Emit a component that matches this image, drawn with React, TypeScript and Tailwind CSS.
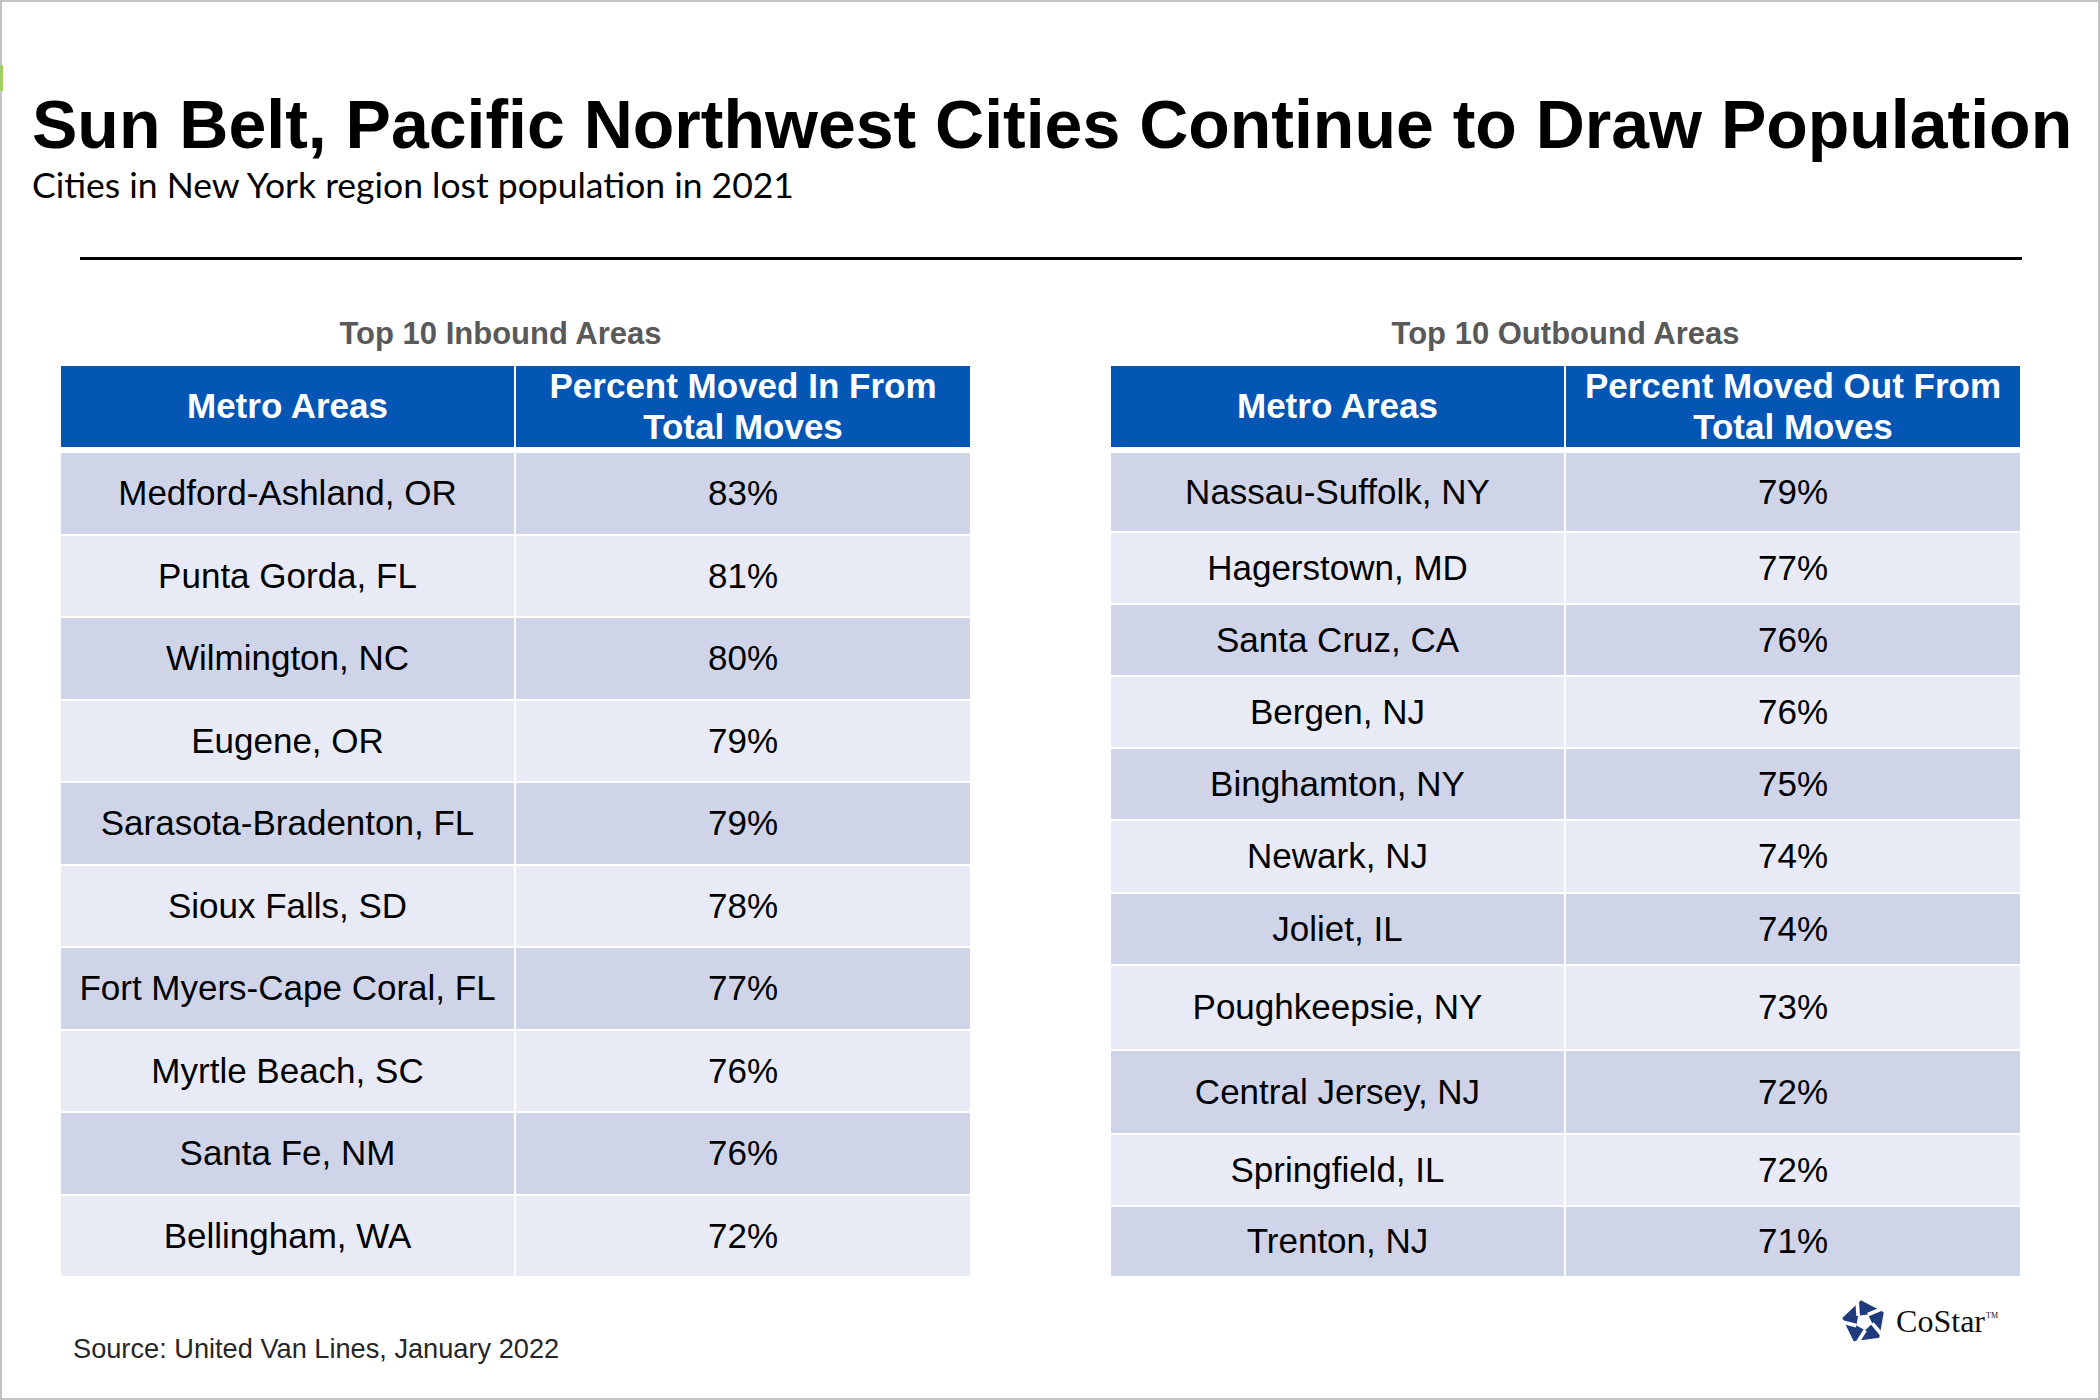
import React from 'react';

type Row = { area: string; pct: string; h: string };

const inbound: Row[] = [
  { area: 'Medford-Ashland, OR', pct: '83%', h: 'h-[80.5px]' },
  { area: 'Punta Gorda, FL', pct: '81%', h: 'h-[80.5px]' },
  { area: 'Wilmington, NC', pct: '80%', h: 'h-[80.5px]' },
  { area: 'Eugene, OR', pct: '79%', h: 'h-[80.5px]' },
  { area: 'Sarasota-Bradenton, FL', pct: '79%', h: 'h-[80.5px]' },
  { area: 'Sioux Falls, SD', pct: '78%', h: 'h-[80.5px]' },
  { area: 'Fort Myers-Cape Coral, FL', pct: '77%', h: 'h-[80.5px]' },
  { area: 'Myrtle Beach, SC', pct: '76%', h: 'h-[80.5px]' },
  { area: 'Santa Fe, NM', pct: '76%', h: 'h-[80.5px]' },
  { area: 'Bellingham, WA', pct: '72%', h: 'h-[80.5px]' },
];

// row heights differ a little in the outbound table
const outbound: Row[] = [
  { area: 'Nassau-Suffolk, NY', pct: '79%', h: 'h-[78px]' },
  { area: 'Hagerstown, MD', pct: '77%', h: 'h-[70px]' },
  { area: 'Santa Cruz, CA', pct: '76%', h: 'h-[70px]' },
  { area: 'Bergen, NJ', pct: '76%', h: 'h-[70px]' },
  { area: 'Binghamton, NY', pct: '75%', h: 'h-[70px]' },
  { area: 'Newark, NJ', pct: '74%', h: 'h-[71px]' },
  { area: 'Joliet, IL', pct: '74%', h: 'h-[70px]' },
  { area: 'Poughkeepsie, NY', pct: '73%', h: 'h-[83px]' },
  { area: 'Central Jersey, NJ', pct: '72%', h: 'h-[82px]' },
  { area: 'Springfield, IL', pct: '72%', h: 'h-[70px]' },
  { area: 'Trenton, NJ', pct: '71%', h: 'h-[69px]' },
];

function MoveTable({
  title,
  titleClass,
  headLine1,
  rows,
}: {
  title: string;
  titleClass: string;
  headLine1: string;
  rows: Row[];
}) {
  return (
    <div className="flex flex-col">
      <div
        className={`text-center text-[31px] leading-[34px] font-bold text-[#595959] ${titleClass}`}
      >
        {title}
      </div>
      <div className="mt-[15px] flex gap-[2px] h-[81px] text-white font-bold text-[35px]">
        <div className="w-[453px] bg-[#0456b5] flex items-center justify-center">
          Metro Areas
        </div>
        <div className="flex-1 bg-[#0456b5] flex flex-col items-center justify-center leading-[40.5px]">
          <span>{headLine1}</span>
          <span>Total Moves</span>
        </div>
      </div>
      <div className="mt-[6px] flex flex-col gap-[2px] text-[35px]">
        {rows.map((r, i) => {
          const bg = i % 2 === 0 ? 'bg-[#cfd4e8]' : 'bg-[#e8ebf5]';
          return (
            <div key={r.area} className={`flex gap-[2px] ${r.h}`}>
              <div className={`w-[453px] flex items-center justify-center ${bg}`}>
                {r.area}
              </div>
              <div className={`flex-1 flex items-center justify-center ${bg}`}>
                {r.pct}
              </div>
            </div>
          );
        })}
      </div>
    </div>
  );
}

// pentagon cut into five pinwheel pieces by white spokes
function CoStarMark() {
  const spokes = [0, 72, 144, 216, 288];
  return (
    <svg width="46" height="44" viewBox="-25 -25 50 48">
      <g transform="rotate(-8)">
        <polygon
          points="0,-24 22.83,-7.42 14.11,19.42 -14.11,19.42 -22.83,-7.42"
          fill="#1f3b7c"
        />
        <polygon
          points="5.4,-7.43 8.74,2.84 0,9.19 -8.74,2.84 -5.4,-7.43"
          fill="#ffffff"
        />
        {spokes.map((a) => (
          <line
            key={a}
            x1="5.4"
            y1="-7.43"
            x2="34"
            y2="-14.5"
            stroke="#ffffff"
            strokeWidth="4"
            transform={`rotate(${a})`}
          />
        ))}
      </g>
    </svg>
  );
}

export default function App() {
  return (
    <div className="relative w-[2100px] h-[1400px] bg-white border-2 border-[#c4c4c4] font-['Liberation_Sans',Arial,sans-serif] text-black">
      <div className="absolute left-[-2px] top-[63px] w-[3px] h-[26px] bg-[#a3cf62]" />

      <div className="pl-[30px] pt-[84px]">
        <h1 className="text-[68px] leading-[76px] font-bold whitespace-nowrap">
          Sun Belt, Pacific Northwest Cities Continue to Draw Population
        </h1>
        <p className="mt-px font-['Lato',sans-serif] text-[35.5px] leading-[43px]">
          Cities in New York region lost population in 2021
        </p>
      </div>

      <div className="ml-[78px] mt-[51px] w-[1942px] h-[3px] bg-black" />

      <div className="ml-[59px] mt-[57px] grid grid-cols-[909px_909px] gap-x-[141px] items-start">
        <MoveTable
          title="Top 10 Inbound Areas"
          titleClass="pr-[30px]"
          headLine1="Percent Moved In From"
          rows={inbound}
        />
        <MoveTable
          title="Top 10 Outbound Areas"
          titleClass=""
          headLine1="Percent Moved Out From"
          rows={outbound}
        />
      </div>

      <div className="flex items-start">
        <div className="ml-[71px] mt-[57px] text-[27.2px] leading-[31px] text-[#262626]">
          Source: United Van Lines, January 2022
        </div>
        <div className="ml-auto mr-[100px] mt-[23px] flex items-center gap-[9px]">
          <CoStarMark />
          <div className="flex items-start font-['Liberation_Serif',serif] text-[#111111]">
            <span className="text-[32px] leading-[42px]">CoStar</span>
            <span className="text-[8px] leading-none mt-[12px] ml-px">TM</span>
          </div>
        </div>
      </div>
    </div>
  );
}
